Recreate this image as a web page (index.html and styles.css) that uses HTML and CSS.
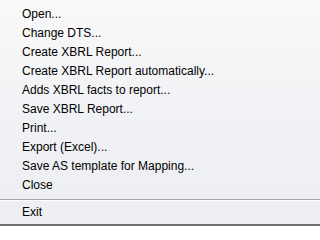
FILE: index.html
```html
<!DOCTYPE html>
<html>
<head>
<meta charset="utf-8">
<link rel="stylesheet" href="styles.css">
</head>
<body>
<div class="menu">
  <div class="item">Open...</div>
  <div class="item">Change DTS...</div>
  <div class="item">Create XBRL Report...</div>
  <div class="item">Create XBRL Report automatically...</div>
  <div class="item">Adds XBRL facts to report...</div>
  <div class="item">Save XBRL Report...</div>
  <div class="item">Print...</div>
  <div class="item">Export (Excel)...</div>
  <div class="item">Save AS template for Mapping...</div>
  <div class="item">Close</div>
  <div class="sep"></div>
  <div class="item">Exit</div>
</div>
</body>
</html>
```

FILE: styles.css
```css
html, body {
  margin: 0;
  padding: 0;
}
.menu {
  box-sizing: border-box;
  width: 100%;
  min-width: 233px;
  height: 226px;
  padding-top: 5px;
  background: linear-gradient(to bottom, #f9f9f9 0%, #f1f2f5 50%, #eceef2 100%);
  border-bottom: 2px solid #6f6f6f;
  font-family: "Liberation Sans", Arial, sans-serif;
  font-size: 12px;
  color: #000;
}
.item {
  height: 19px;
  line-height: 19px;
  padding-left: 22px;
  white-space: nowrap;
}
.sep {
  margin: 4px 0 2px;
  height: 0;
  border-top: 1px solid #a4a6aa;
  border-bottom: 1px solid #ffffff;
}
```
